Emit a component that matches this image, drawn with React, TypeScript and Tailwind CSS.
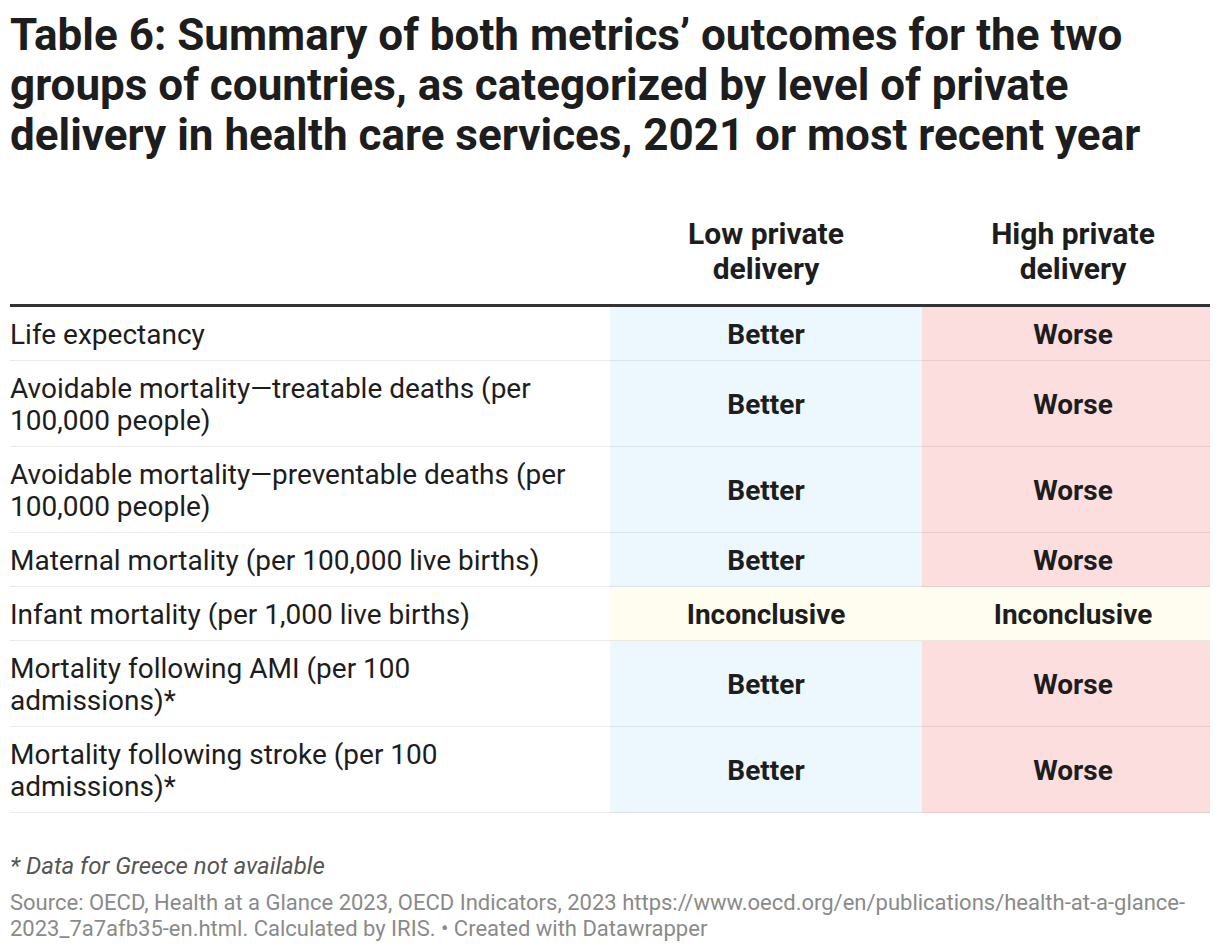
const rows: { label: string; low: string; high: string; inc?: boolean }[] = [
  { label: 'Life expectancy', low: 'Better', high: 'Worse' },
  { label: 'Avoidable mortality—treatable deaths (per 100,000 people)', low: 'Better', high: 'Worse' },
  { label: 'Avoidable mortality—preventable deaths (per 100,000 people)', low: 'Better', high: 'Worse' },
  { label: 'Maternal mortality (per 100,000 live births)', low: 'Better', high: 'Worse' },
  { label: 'Infant mortality (per 1,000 live births)', low: 'Inconclusive', high: 'Inconclusive', inc: true },
  { label: 'Mortality following AMI (per 100 admissions)*', low: 'Better', high: 'Worse' },
  { label: 'Mortality following stroke (per 100 admissions)*', low: 'Better', high: 'Worse' },
]

export default function App() {
  return (
    <div className="w-[1220px] bg-white px-[10px] pt-[10px] text-[#1d1d1d]" style={{ fontFamily: 'Roboto, "Liberation Sans", sans-serif' }}>
      <h1 className="text-[44px] font-bold leading-[50px] pr-[20px]">
        Table 6: Summary of both metrics’ outcomes for the two groups of countries, as categorized by level of private delivery in health care services, 2021 or most recent year
      </h1>

      <table className="mt-[56px] w-[1200px] border-collapse table-fixed">
        <colgroup>
          <col className="w-[600px]" />
          <col className="w-[312px]" />
          <col className="w-[288px]" />
        </colgroup>
        <thead>
          <tr className="border-b-[3px] border-[#333]">
            <th />
            <th className="pb-[18px] text-center text-[30px] font-bold leading-[35px]">Low private<br />delivery</th>
            <th className="pb-[18px] pl-[14px] text-center text-[30px] font-bold leading-[35px]">High private<br />delivery</th>
          </tr>
        </thead>
        <tbody>
          {rows.map(r => (
            <tr key={r.label} className="border-b border-black/[0.08]">
              <td className="pt-[12px] pb-[9px] pr-[30px] text-[28px] leading-[32px]">{r.label}</td>
              <td className={`pt-[12px] pb-[9px] text-center text-[28px] font-bold leading-[32px] ${r.inc ? 'bg-[#fffcf0]' : 'bg-[#ecf7fe]'}`}>{r.low}</td>
              <td className={`pt-[12px] pb-[9px] pl-[14px] text-center text-[28px] font-bold leading-[32px] ${r.inc ? 'bg-[#fffcf0]' : 'bg-[#fcdedf]'}`}>{r.high}</td>
            </tr>
          ))}
        </tbody>
      </table>

      <p className="mt-[38px] text-[24px] italic leading-[30px] text-[#555]">* Data for Greece not available</p>
      <p className="mt-[9px] pb-[10px] text-[22px] leading-[26px] text-[#8a8a8a]">
        Source: OECD, Health at a Glance 2023, OECD Indicators, 2023 https://www.oecd.org/en/publications/health-at-a-glance-2023_7a7afb35-en.html. Calculated by IRIS. • Created with Datawrapper
      </p>
    </div>
  )
}
